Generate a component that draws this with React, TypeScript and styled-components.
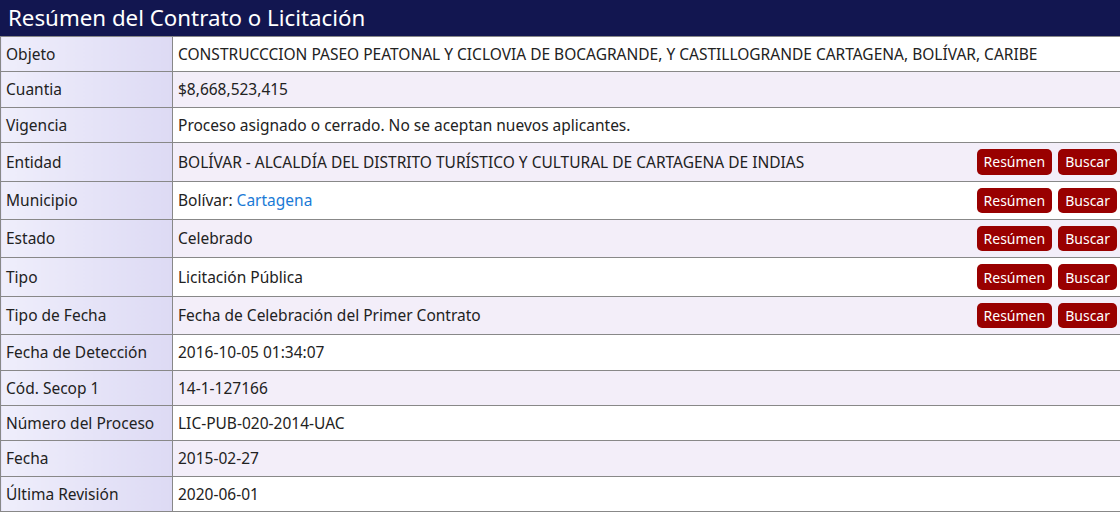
import { createGlobalStyle, styled } from 'styled-components';

type Row = {
  label: string;
  value: string;
  link?: string;
  actions?: boolean;
};

const rows: Row[] = [
  {
    label: 'Objeto',
    value: 'CONSTRUCCCION PASEO PEATONAL Y CICLOVIA DE BOCAGRANDE, Y CASTILLOGRANDE CARTAGENA, BOLÍVAR, CARIBE',
  },
  { label: 'Cuantia', value: '$8,668,523,415' },
  { label: 'Vigencia', value: 'Proceso asignado o cerrado. No se aceptan nuevos aplicantes.' },
  {
    label: 'Entidad',
    value: 'BOLÍVAR - ALCALDÍA DEL DISTRITO TURÍSTICO Y CULTURAL DE CARTAGENA DE INDIAS',
    actions: true,
  },
  { label: 'Municipio', value: 'Bolívar: ', link: 'Cartagena', actions: true },
  { label: 'Estado', value: 'Celebrado', actions: true },
  { label: 'Tipo', value: 'Licitación Pública', actions: true },
  { label: 'Tipo de Fecha', value: 'Fecha de Celebración del Primer Contrato', actions: true },
  { label: 'Fecha de Detección', value: '2016-10-05 01:34:07' },
  { label: 'Cód. Secop 1', value: '14-1-127166' },
  { label: 'Número del Proceso', value: 'LIC-PUB-020-2014-UAC' },
  { label: 'Fecha', value: '2015-02-27' },
  { label: 'Última Revisión', value: '2020-06-01' },
];

const App = () => {
  return (
    <>
      <GlobalStyle />
      <Page>
        <Title>Resúmen del Contrato o Licitación</Title>
        <Table>
          <colgroup>
            <col style={{ width: '172px' }} />
            <col />
          </colgroup>
          <tbody>
            {rows.map((row, i) => (
              <tr key={row.label}>
                <Label>{row.label}</Label>
                <Value $alt={i % 2 === 1}>
                  <ValueInner>
                    <span>
                      {row.value}
                      {row.link && <Link href="#">{row.link}</Link>}
                    </span>
                    {row.actions && (
                      <Actions>
                        <RedButton type="button">Resúmen</RedButton>
                        <RedButton type="button">Buscar</RedButton>
                      </Actions>
                    )}
                  </ValueInner>
                </Value>
              </tr>
            ))}
          </tbody>
        </Table>
      </Page>
    </>
  );
};

export default App;

const GlobalStyle = createGlobalStyle`
  body {
    margin: 0;
    background: #fff;
    overflow: hidden;
    font-family: 'Noto Sans', 'Open Sans', sans-serif;
  }
`;

const Page = styled.div`
  width: 1124px;
  color: #222;
`;

const Title = styled.h1`
  margin: 0;
  height: 36px;
  padding: 0 8px;
  background: #121650;
  color: #fff;
  font-size: 22.3px;
  font-weight: 400;
  line-height: 36px;
`;

const Table = styled.table`
  width: 100%;
  border-collapse: collapse;
  table-layout: fixed;
  font-size: 15.5px;
  border: 1px solid #888;
  border-top: none;

  td {
    border: 1px solid #888;
    padding: 6px 5px;
    line-height: 22.4px;
    vertical-align: middle;
  }
`;

const Label = styled.td`
  background: linear-gradient(to right, #efeefb, #dddaf4);
`;

const Value = styled.td<{ $alt?: boolean }>`
  background: ${({ $alt }) => ($alt ? '#f3eef9' : '#fff')};
`;

const ValueInner = styled.div`
  display: flex;
  align-items: center;
  justify-content: space-between;
  padding-right: 1px;
`;

const Actions = styled.div`
  display: flex;
  gap: 6px;
`;

const RedButton = styled.button`
  height: 25.4px;
  padding: 0 7px;
  border: none;
  border-radius: 5px;
  background: #990000;
  color: #fff;
  font-family: 'Noto Sans', 'Open Sans', sans-serif;
  font-size: 14px;
  cursor: pointer;
`;

const Link = styled.a`
  color: #1a7ad6;
  text-decoration: none;
`;
